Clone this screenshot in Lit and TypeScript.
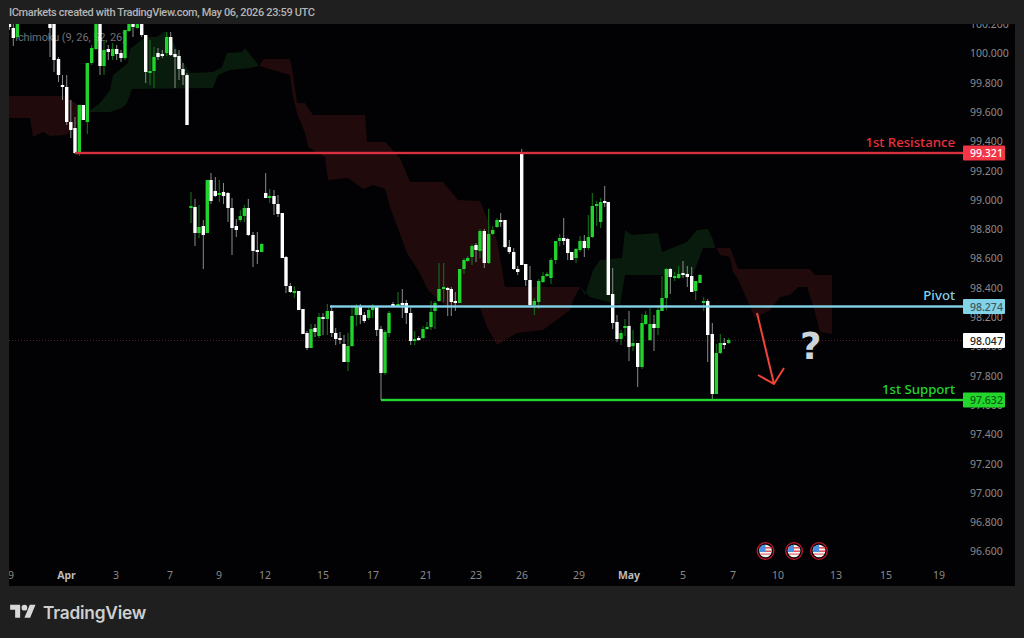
import { LitElement, html, css, svg } from "lit";
import { customElement } from "lit/decorators.js";

type C = [number, number, number, number, number, "w" | "g"];
const W = "w", G = "g";
const candles = ([
[9.5,24,27,24,30,W],[13.3,28,38,24,46,W],[17.3,24,37,24,39,G],
[50,24,28,24,57,W],[54,24,60,24,72,W],[58.5,59,75,57,82,W],[62.5,85,87,75,100,W],[66.7,87,122,75,125,W],[70.8,122,130,100,138,W],[75,128,153,117,154,W],[79.3,105,153,105,156,G],[83.3,105,120,105,120,W],[87.3,63,122,63,134,G],[91.7,48,63,45,65,G],[96,24,49,24,50,G],[100,24,66,24,75,W],[104,50,66,40,75,G],[108.3,49,52,45,60,W],[112.7,49,56,43,60,G],[116.7,49,54,45,60,W],[121,53,58,50,62,W],[125,30,58,30,60,G],[129,24,31,24,32,G],[133,24,27,24,37,W],[137.3,24,28,24,29,G],[141.7,24,35,24,37,W],[145.7,35,72,35,83,W],[150,71,72,40,85,G],[154,57,71,47,88,G],[158,53,57,48,60,W],[162.3,54,56,50,58,W],[166.7,37,53,32,56,G],[170.7,37,55,32,56,W],[175,54,57,49,88,W],[179,56,69,50,80,W],[183,69,75,63,85,W],[187,75,125,73,125,W],
[191,206,208,192,223,G],[195,207,233,199,246,W],[199,227,233,205,238,G],[203.3,226,235,220,269,W],[207.3,180,233,180,233,G],[211,180,201,173,204,W],[215.3,191,196,177,197,W],[219.3,193,195,180,202,G],[223.5,192,196,183,204,W],[228,193,208,192,222,W],[232,208,228,198,255,W],[236.3,226,230,219,237,W],[240.3,216,220,210,222,G],[244.3,208,216,205,222,G],[248.3,208,235,199,236,W],[253,235,251,232,267,W],[257.3,250,252,232,264,W],[261.7,244,252,243,252,G],
[265.7,193,198,173,198,W],[269.7,196,198,189,203,G],[274,196,204,190,215,W],[278,204,214,195,217,W],[282.3,213,258,213,258,W],[286,257,286,256,293,W],[290.3,286,292,283,293,W],[294.3,291,292,286,298,G],[298.7,291,310,291,310,W],[303,309,334,309,334,W],[307,333,348,331,350,W],[311,329,348,324,348,G],[315,328,332,324,337,W],[319,317,336,313,338,G],[323,317,319,313,335,W],[327.3,311,319,304,335,G],[331.7,311,333,305,337,W],[335.7,333,339,328,345,W],[340,338,340,332,344,W],[344,344,362,335,362,W],[348,346,362,333,371,G],[352,316,346,307,347,G],[356.3,306,315,304,326,G],[360.3,306,315,304,324,W],[364.3,315,321,312,323,W],[368.7,310,318,306,320,G],[372.7,306,310,304,318,G],[376.7,306,330,306,336,W],[381,329,373,326,400,W],[385,332,373,330,375,G],[389,313,333,311,337,G],[393,304,306,302,307,W],[398,304,306,292,307,G],[402.3,303,304,289,318,W],[406.3,303,313,300,324,W],[410.7,313,341,308,345,W],[414.7,339,341,331,345,G],[418.7,338,339,336,341,W],[423,329,338,326,339,G],[427,327,329,322,330,G],[431,312,327,301,330,G],[435,303,311,301,329,G],
[439,289,301,263,302,G],[443.7,287,288,263,302,G],[447.7,288,290,287,316,W],[451.3,289,302,287,316,W],[455.3,301,303,292,311,W],[459.7,269,303,269,303,G],[464,260,269,258,274,G],[467.7,258,261,256,262,G],[472,246,257,244,265,G],[476,245,250,243,262,W],[480,231,251,229,258,G],[484.3,231,263,229,268,W],[488.7,234,263,209,264,G],[492.7,230,234,226,235,G],[497,220,227,218,228,G],[500.7,220,221,213,227,W],[505,220,247,220,248,W],[509.3,247,252,240,254,W],[513.7,252,269,248,270,W],[517.7,269,272,266,275,W],[521.7,152,265,149,265,W],[525.7,264,280,264,286,W],[530,280,305,266,307,W],[534.3,301,305,298,315,G],[538.7,281,302,279,309,G],[543,276,282,272,283,G],[547,274,276,272,277,G],[551,260,278,258,284,G],[555.7,241,260,241,264,G],[559.7,238,241,234,246,G],[563.7,238,241,218,245,W],[567.7,239,253,238,260,W],[571.7,252,260,252,260,W],[576,249,258,248,263,G],[580,241,250,236,252,G],[584.3,241,248,235,257,W],[588.3,237,248,215,250,G],[592.3,206,237,193,238,G],[596.7,204,206,201,226,G],[600.7,202,222,198,228,G],[604.7,201,202,186,207,W],[608.3,202,295,202,295,W],
[612.7,294,323,268,329,W],[617,322,339,315,342,W],[621,333,339,330,345,G],[625,326,327,319,336,G],[629,326,347,311,361,W],[633,343,346,330,351,G],[637.7,343,367,343,387,W],[642,323,367,314,369,G],[645.7,315,324,311,325,G],[650,324,340,308,341,G],[654,324,328,315,351,W],[658,310,328,305,335,G],[662,298,311,276,311,G],[666.3,269,298,268,310,G],[670.3,269,277,268,294,W],[674.7,276,277,272,281,G],[678.7,274,278,266,279,G],[683,273,274,261,278,W],[687.3,274,277,266,287,W],[691.7,276,292,267,292,W],[695.7,281,291,281,300,G],[700,275,283,274,283,G],
[703.7,301,302,297,311,G],[707.7,301,335,299,362,W],[712.3,334,394,323,401,W],[716.3,353,394,344,394,G],[720.3,343,353,334,354,G],[724.3,343,345,338,349,W],[728.7,340,343,338,344,G],
] as C[]);

const redClouds = [
"9,96 64,96 75,103 88,112 70,132 65,135 50,136 43,132 33,137 30,118 9,118",
"259,66 264,59 290,59 293,75 297,103 305,103 313,115 365,115 367,142 385,142 400,158 410,182 443,182 458,200 480,201 492,230 497,240 505,287 580,287 573,300 570,310 543,330 517,333 497,345 487,327 480,308 445,306 428,290 418,270 407,253 390,207 385,189 373,185 363,189 348,178 328,180 325,157 308,147 305,133 297,113 293,97 290,75",
"712,239 717,248 730,248 733,255 738,269 810,269 815,275 832,275 832,334 820,332 813,305 807,287 798,287 790,295 780,297 770,310 755,318 748,302 738,279 733,272 730,257 720,255",
];
const greenClouds = [
"88,112 100,103 110,90 113,75 128,63 130,49 145,37 157,37 165,31 173,42 183,62 190,73 213,72 222,67 227,53 242,52 245,48 257,63 259,66 250,68 230,70 218,75 213,88 132,89 127,103 122,108 110,112",
"580,287 585,295 593,270 600,260 622,258 625,230 632,235 658,233 662,252 687,242 697,230 708,229 713,240 715,248 703,248 693,275 625,275 620,305 590,297",
];
const prices = ["100.200","100.000","99.800","99.600","99.400","99.200","99.000","98.800","98.600","98.400","98.200","98.000","97.800","97.600","97.400","97.200","97.000","96.800","96.600"];
const times: [string, number, boolean][] = [["9",11,false],["Apr",66.5,true],["3",116,false],["7",170,false],["9",219,false],["12",265,false],["15",323,false],["17",373,false],["21",426,false],["23",476,false],["26",522,false],["29",579,false],["May",629,true],["5",683,false],["7",733,false],["10",778,false],["13",836,false],["15",886,false],["19",939,false]];
const flags = [765.5, 794, 819];
const levels = [
  { y: 153, x: 75, cls: "res", name: "1st Resistance", price: "99.321" },
  { y: 306.5, x: 330, cls: "piv", name: "Pivot", price: "98.274" },
  { y: 400, x: 381, cls: "sup", name: "1st Support", price: "97.632" },
];

@customElement("app-root")
export class AppRoot extends LitElement {
  static styles = css`
    :host { display: block; width: 1024px; height: 638px; overflow: hidden; background: #1f1f1f; }
    .page { display: flex; flex-direction: column; height: 638px; }
    .head { height: 24px; padding: 0 9px; display: flex; align-items: center; color: #b4b4b4; font: 500 11px Roboto, sans-serif; letter-spacing: -0.35px; box-sizing: border-box; white-space: nowrap; }
    .chart { display: block; width: 1006px; height: 562px; margin-left: 9px; background: #020204; }
    .foot { flex: 1; display: flex; align-items: center; gap: 7px; padding: 0 0 0 10px; box-sizing: border-box; color: #cfcfcf; }
    .foot svg { width: 26px; height: 20px; fill: #d8d8d8; }
    .brand { font: 600 17.3px Inter, sans-serif; letter-spacing: -0.2px; }
    text { font-family: "Noto Sans", sans-serif; }
    .axis { font-size: 10.5px; fill: #8a8a8a; }
    .axis.major { fill: #bcbcbc; font-weight: 700; }
    .legend { font: 11px Roboto, sans-serif; letter-spacing: -0.1px; fill: #6f7174; }
    .lvl { font-size: 13.2px; font-weight: 500; }
    .res .line { fill: #d93040; } .res .box { fill: #f23645; } .res .tag { fill: #e8303f; } .res .val { fill: #fff; }
    .piv .line { fill: #82d2e8; } .piv .box { fill: #82d2e8; } .piv .tag { fill: #82d2e8; } .piv .val { fill: #3e5860; }
    .sup .line { fill: #24d62e; } .sup .box { fill: #22d62c; } .sup .tag { fill: #24d62e; } .sup .val { fill: #0f5a14; }
    .val { font-size: 10.5px; font-weight: 500; }
    .cur { fill: #fff; } .curv { fill: #222; font-size: 10.5px; font-weight: 500; }
    .q { font: 700 37px "DejaVu Sans", sans-serif; fill: #cdd5da; }
    .arrow { fill: none; stroke: #f0433a; stroke-width: 2; }
    .dots { stroke: #4a2424; stroke-width: 1; stroke-dasharray: 1 2; }
    .rc { fill: #200a0c; } .gc { fill: #081b0c; }
    .body-w { fill: #fff; } .body-g { fill: #22d32d; }
    .wick-w { fill: #8a8a8a; } .wick-g { fill: #137a1b; }
    .ring { fill: #050505; stroke: #c6162b; stroke-width: 1.3; }
  `;

  private flag(cx: number) {
    const y = 551;
    return svg`<g>
      <circle class="ring" cx=${cx} cy=${y} r="8.3"></circle>
      <circle cx=${cx} cy=${y} r="6.3" fill="#f4f4f4"></circle>
      <rect x=${cx - 6} y=${y - 4} width="12" height="1.6" fill="#e2575f"></rect>
      <rect x=${cx - 6} y=${y - 0.6} width="12" height="1.6" fill="#e2575f"></rect>
      <rect x=${cx - 5} y=${y + 2.4} width="10" height="1.5" fill="#e8858a"></rect>
      <path d="M${cx - 6} ${y - 1} A6.3 6.3 0 0 1 ${cx} ${y - 6.3} V${y + 1} H${cx - 6}Z" fill="#4a90e2"></path>
    </g>`;
  }

  render() {
    return html`<div class="page">
      <div class="head">ICmarkets created with TradingView.com, May 06, 2026 23:59 UTC</div>
      <svg class="chart" viewBox="9 24 1006 562">
        ${redClouds.map((p) => svg`<polygon class="rc" points=${p}></polygon>`)}
        ${greenClouds.map((p) => svg`<polygon class="gc" points=${p}></polygon>`)}
        <text class="legend" x="15" y="41">Ichimoku (9, 26, 52, 26)</text>
        <line class="dots" x1="9" y1="340.5" x2="963" y2="340.5"></line>
        <g>
          ${candles.map(([x, t, b, wt, wb, c]) => svg`<rect class="wick-${c}" x=${x - 0.5} y=${wt} width="1" height=${wb - wt}></rect>
              <rect class="body-${c}" x=${x - 1.7} y=${t} width="3.4" height=${Math.max(b - t, 2)}></rect>`)}
        </g>
        ${prices.map((p, i) => svg`<text class="axis" x="970" y=${24 + i * 29.3 + 4}>${p}</text>`)}
        ${times.map(([t, x, m]) => svg`<text class="axis ${m ? "major" : ""}" x=${x} y="579" text-anchor="middle">${t}</text>`)}
        ${levels.map((l) => svg`<g class=${l.cls}>
          <rect class="line" x=${l.x} y=${l.y - 1.2} width=${963 - l.x} height="2.4"></rect>
          <text class="lvl tag" x="955" y=${l.y - 6.5} text-anchor="end">${l.name}</text>
          <rect class="box" x="963" y=${l.y - 7.5} width="42" height="15" rx="1"></rect>
          <text class="val" x="970" y=${l.y + 4}>${l.price}</text>
        </g>`)}
        <rect class="cur" x="963" y="333" width="42" height="15" rx="1"></rect>
        <text class="curv" x="970" y="344.5">98.047</text>
        <path class="arrow" d="M757 313 L774 384 M758 375 L774 384 L784 368"></path>
        <text class="q" x="800" y="358.5">?</text>
        ${flags.map((f) => this.flag(f))}
      </svg>
      <div class="foot">
        <svg viewBox="0 0 36 28"><path d="M14 22H7V11H0V4h14v18zM28 22h-8l7.5-18h8L28 22z"></path><circle cx="20" cy="8" r="4"></circle></svg>
        <span class="brand">TradingView</span>
      </div>
    </div>`;
  }
}
